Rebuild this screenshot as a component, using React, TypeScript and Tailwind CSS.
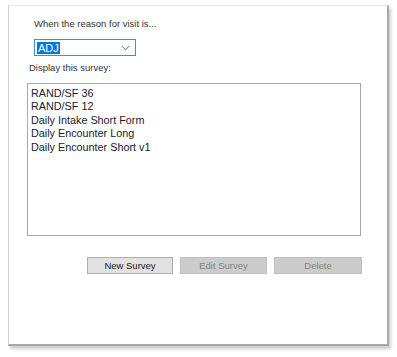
import React from "react";

const surveys = [
  "RAND/SF 36",
  "RAND/SF 12",
  "Daily Intake Short Form",
  "Daily Encounter Long",
  "Daily Encounter Short v1",
];

const App: React.FC = () => {
  return (
    <div className="w-[397px] h-[357px] bg-white pt-[5px] pl-[8px] font-['Liberation_Sans',Arial,sans-serif] text-[#1a1a1a]">
      <div className="w-[381px] h-[341px] bg-white border-t border-l border-t-[#e6e6e6] border-l-[#d0d0d0] border-r-2 border-b-2 border-r-[#a8a8a8] border-b-[#a8a8a8] shadow-[2px_3px_3px_rgba(0,0,0,0.2)] flex flex-col">
        <div className="mt-[12px] ml-[25px] text-[9.5px] leading-[12px] text-[#333]">
          When the reason for visit is...
        </div>

        <div className="mt-[9px] ml-[25px] w-[102px] h-[17px] border border-[#3c8fe0] bg-white flex items-center pl-[2px] pr-[5px]">
          <span className="bg-[#0078d7] text-white text-[11px] leading-[12px] px-[1px]">ADJ</span>
          <svg className="ml-auto" width="9" height="6" viewBox="0 0 9 6">
            <path d="M0.5 0.8 L4.5 4.8 L8.5 0.8" fill="none" stroke="#666" strokeWidth="1" />
          </svg>
        </div>

        <div className="mt-[6px] ml-[20px] text-[9.5px] leading-[12px] text-[#333]">
          Display this survey:
        </div>

        <div className="mt-[9px] ml-[18px] w-[334px] h-[153px] border border-[#a8a8a8] bg-white pt-[3px] pl-[3px]">
          {surveys.map((s) => (
            <div key={s} className="text-[10.8px] leading-[13.4px] text-[#1a1a2a]">
              {s}
            </div>
          ))}
        </div>

        <div className="mt-[21px] ml-[78px] flex gap-[7px] text-[9.5px]">
          <button className="w-[86px] h-[17px] bg-[#e1e1e1] border border-[#adadad] text-[#222] leading-none">
            New Survey
          </button>
          <button disabled className="w-[87px] h-[17px] bg-[#cccccc] border border-[#bfbfbf] text-[#838383] leading-none">
            Edit Survey
          </button>
          <button disabled className="w-[88px] h-[17px] bg-[#cccccc] border border-[#bfbfbf] text-[#838383] leading-none">
            Delete
          </button>
        </div>
      </div>
    </div>
  );
};

export default App;
